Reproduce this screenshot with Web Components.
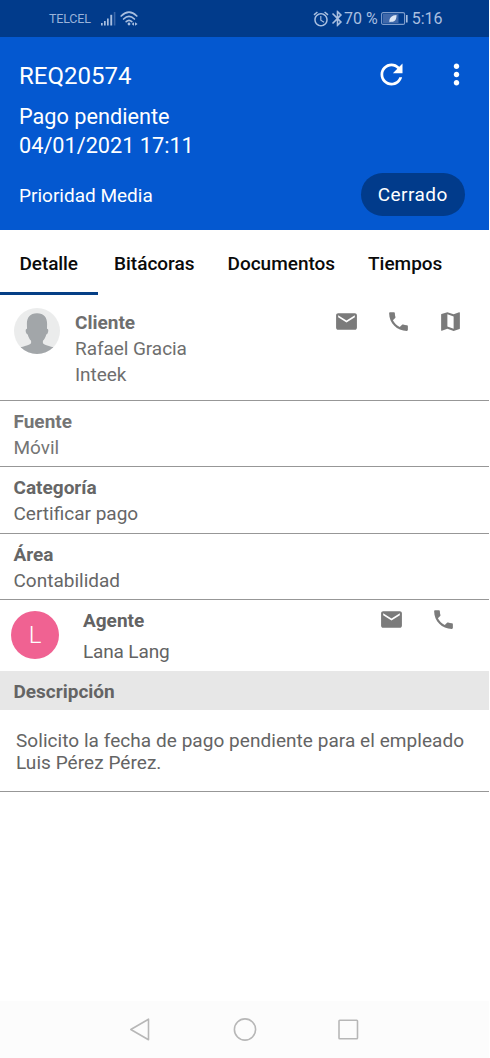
<!DOCTYPE html>
<html lang="es">
<head>
<meta charset="utf-8">
<title>REQ20574</title>
<style>
body{margin:0;background:#fff;font-family:Roboto,"Liberation Sans",sans-serif}
</style>
</head>
<body>
<ticket-app></ticket-app>
<script>
function define(name, html){
  const t=document.createElement('template');
  t.innerHTML=html;
  customElements.define(name, class extends HTMLElement{
    constructor(){
      super();
      this.attachShadow({mode:'open'}).append(t.content.cloneNode(true));
    }
  });
}

const ICONS={
  refresh:'M17.65 6.35C16.2 4.9 14.21 4 12 4c-4.42 0-7.99 3.58-7.99 8s3.57 8 7.99 8c3.73 0 6.84-2.55 7.73-6h-2.08c-.82 2.33-3.04 4-5.65 4-3.31 0-6-2.69-6-6s2.69-6 6-6c1.66 0 3.14.69 4.22 1.78L13 11h7V4l-2.35 2.35z',
  more:'M12 8c1.1 0 2-.9 2-2s-.9-2-2-2-2 .9-2 2 .9 2 2 2zm0 2c-1.1 0-2 .9-2 2s.9 2 2 2 2-.9 2-2-.9-2-2-2zm0 6c-1.1 0-2 .9-2 2s.9 2 2 2 2-.9 2-2-.9-2-2-2z',
  mail:'M20 4H4c-1.1 0-1.99.9-1.99 2L2 18c0 1.1.9 2 2 2h16c1.1 0 2-.9 2-2V6c0-1.1-.9-2-2-2zm0 4l-8 5-8-5V6l8 5 8-5v2z',
  phone:'M6.62 10.79c1.44 2.83 3.76 5.14 6.59 6.59l2.2-2.2c.27-.27.67-.36 1.02-.24 1.12.37 2.33.57 3.57.57.55 0 1 .45 1 1V20c0 .55-.45 1-1 1-9.39 0-17-7.61-17-17 0-.55.45-1 1-1h3.5c.55 0 1 .45 1 1 0 1.25.2 2.45.57 3.57.11.35.03.74-.25 1.02l-2.2 2.2z',
  map:'M20.5 3l-.16.03L15 5.1 9 3 3.36 4.9c-.21.07-.36.25-.36.48V20.5c0 .28.22.5.5.5l.16-.03L9 18.9l6 2.1 5.64-1.9c.21-.07.36-.25.36-.48V3.5c0-.28-.22-.5-.5-.5zM15 19l-6-2.11V5l6 2.11V19z',
  alarm:'M22 5.72l-4.6-3.86-1.29 1.53 4.6 3.86L22 5.72zM7.88 3.39L6.6 1.86 2 5.71l1.29 1.53 4.59-3.85zM12.5 8H11v6l4.75 2.85.75-1.23-4-2.37V8zM12 4c-4.97 0-9 4.03-9 9s4.02 9 9 9c4.97 0 9-4.03 9-9s-4.03-9-9-9zm0 16c-3.87 0-7-3.13-7-7s3.13-7 7-7 7 3.13 7 7-3.13 7-7 7z',
  bluetooth:'M17.71 7.71L12 2h-1v7.59L6.41 5 5 6.41 10.59 12 5 17.59 6.41 19 11 14.41V22h1l5.71-5.71-4.3-4.29 4.3-4.29zM13 5.83l1.88 1.88L13 9.59V5.83zm1.88 10.46L13 18.17v-3.76l1.88 1.88z'
};
customElements.define('glyph-icon', class extends HTMLElement{
  constructor(){super();this.attachShadow({mode:'open'});}
  connectedCallback(){
    this.shadowRoot.innerHTML=`<style>:host{display:block;width:25px;height:25px;flex:none}svg{display:block;width:100%;height:100%}</style>
    <svg viewBox="0 0 24 24" fill="currentColor"><path d="${ICONS[this.getAttribute('name')]}"/></svg>`;
  }
});

define('status-bar',`
<style>
:host{display:flex;box-sizing:border-box;height:37px;padding:0 46.5px 0 49px;background:#013b8b;color:#a9bfe0;align-items:center}
.carrier{font-size:12.5px;line-height:37px;letter-spacing:-.2px;color:#9ab3da}
.signal{margin-left:10px;width:15px;height:14px}
.wifi{margin-left:4px;width:18px;height:15px}
.right{margin-left:auto;display:flex;align-items:center;font-size:16px;line-height:37px}
.alarm{width:18px;height:18px}
.bt{width:19px;height:19px;margin:0 -3px 0 -2px}
.bat{width:27px;height:13px;margin:0 3.5px 0 3.5px}
svg{display:block}
</style>
<span class="carrier">TELCEL</span>
<svg class="signal" viewBox="0 0 15 14"><g fill="#a9bfe0"><rect x="0" y="11" width="1.7" height="2.5"/><rect x="3" y="9" width="1.7" height="4.5"/><rect x="6" y="6.5" width="1.7" height="7"/><rect x="9.3" y="2.8" width="1.9" height="10.7"/></g><rect x="12.8" y="0" width="1.6" height="13.5" fill="#3b66a8"/></svg>
<svg class="wifi" viewBox="0 0 18 15"><g fill="none" stroke="#a9bfe0" stroke-width="1.7" stroke-linecap="round"><path d="M1.2 5Q9-2.6 16.8 5"/><path d="M3.6 8Q9 2.8 14.4 8"/><path d="M6.2 10.7Q9 8.2 11.8 10.7"/></g><circle cx="9" cy="13" r="1.4" fill="#a9bfe0"/><path d="M14 11.3L11.6 13l2.4 1.7zM15 11.3l2.6 1.7-2.6 1.7z" fill="#a9bfe0"/></svg>
<div class="right">
<glyph-icon class="alarm" name="alarm"></glyph-icon><glyph-icon class="bt" name="bluetooth"></glyph-icon><span>70 %</span>
<svg class="bat" viewBox="0 0 27 13"><rect x=".6" y=".6" width="23" height="11.8" rx="1.5" fill="none" stroke="#7f9dcc" stroke-width="1.1"/><rect x="2" y="2" width="15.5" height="9" fill="#3f68aa"/><path d="M8.400 10.200C8 5.400 11 3.300 15.500 3c.2 4.500-1.800 7.400-5.700 6.700z" fill="#dce6f5"/><rect x="25" y="3" width="1.600" height="7.500" fill="#a9bfe0"/></svg>
<span>5:16</span>
</div>`);

define('status-pill',`
<style>:host{display:block;width:103.500px;height:43px;border-radius:22px;background:#013b8b;text-align:center;font-size:19px;line-height:43px;letter-spacing:.45px}</style><slot></slot>`);

define('ticket-header',`
<style>
:host{display:block;box-sizing:border-box;height:193px;background:#0458d0;color:#fff;padding:22px 24.500px 0 19px}
.top{display:flex;height:32px;align-items:center}
.id{font-size:24px;line-height:32px;padding-top:1px}
.act{margin:-1px -8.500px 0 auto;display:flex;gap:32px}
.act glyph-icon{width:33px;height:33px}
.info{font-size:21.700px;line-height:29px;margin-top:11px}
.bottom{display:flex;justify-content:space-between;height:43px;margin-top:13px}
.prio{font-size:19px;line-height:45px}
</style>
<div class="top"><span class="id"><slot name="id"></slot></span><div class="act"><glyph-icon name="refresh"></glyph-icon><glyph-icon name="more"></glyph-icon></div></div>
<div class="info"><slot name="title"></slot><br><slot name="date"></slot></div>
<div class="bottom"><span class="prio"><slot name="priority"></slot></span><status-pill><slot name="status"></slot></status-pill></div>`);

define('tab-item',`
<style>:host{display:block;box-sizing:border-box;height:65px;font-size:19px;font-weight:500;line-height:67px;color:#0a0a0a;white-space:nowrap}
:host([active]){border-bottom:3px solid #053f86}</style><slot></slot>`);

define('tab-bar',`
<style>:host{display:flex;height:65px;background:#fff}
.a{padding:0 19.500px;width:98px;letter-spacing:-.08px}.b{margin-left:16px;width:113.500px}.c{width:140.500px}</style>
<tab-item class="a" active>Detalle</tab-item><tab-item class="b">Bitácoras</tab-item><tab-item class="c">Documentos</tab-item><tab-item>Tiempos</tab-item>`);

define('person-row',`
<style>
:host{display:flex;box-sizing:border-box;color:#6e6e6e;font-size:19px}
.lines{white-space:nowrap}
.actions{display:flex;gap:26.700px;margin-left:auto}
</style>
<slot name="avatar"></slot>
<div class="lines"><slot></slot></div>
<div class="actions"><slot name="action"></slot></div>`);

define('photo-avatar',`
<style>:host{display:block;width:46px;height:46px}svg{display:block}</style>
<svg width="46" height="46" viewBox="0 0 46 46"><defs><clipPath id="c"><circle cx="23" cy="23" r="23"/></clipPath></defs><circle cx="23" cy="23" r="23" fill="#ebecec"/><path clip-path="url(#c)" fill="#a2a6a9" d="M23 5.200c7 0 10.300 4.500 10.100 10.800l-.1 4.700c1.700.1 1.500 2.500.7 4.400-.4 1-.8 1.300-1.400 1.300-.8 3-2 5-3.400 6.300v2.200c.5 1.700 3.600 2.300 10.600 4.400V46h-33v-6.700c7-2.100 10.100-2.700 10.600-4.400v-2.200c-1.400-1.300-2.600-3.300-3.400-6.300-.6 0-1-.3-1.400-1.300-.8-1.900-1-4.300.7-4.400L12.900 16C12.700 9.700 16 5.200 23 5.200z"/></svg>`);

define('letter-avatar',`
<style>:host{display:block;width:48px;height:48px;border-radius:50%;background:#f06292;color:#fff;font-size:24px;font-weight:300;line-height:49px;text-align:center}</style><slot></slot>`);

define('field-row',`
<style>:host{display:block;box-sizing:border-box;border-bottom:1px solid #979797;padding:8px 14px 0 13.500px;color:#666;font-size:19px;line-height:26px}
b{display:block;font-weight:700}</style><b><slot name="label"></slot></b><slot></slot>`);

define('description-block',`
<style>:host{display:block;color:#646464;font-size:19px}
.head{height:39px;box-sizing:border-box;background:#e7e7e7;padding:0 13.500px;font-weight:700;line-height:41px}
.body{box-sizing:border-box;height:82px;padding:20px 16px 0;line-height:22px;letter-spacing:.05px;border-bottom:1px solid #979797}</style>
<div class="head"><slot name="label"></slot></div><div class="body"><slot></slot></div>`);

define('nav-bar',`
<style>:host{display:flex;box-sizing:border-box;height:57px;background:#fcfcfc;justify-content:center;gap:80px;align-items:center}
svg{display:block;width:24px;height:24px;fill:none;stroke:#b7b7b7;stroke-width:1.6;stroke-linejoin:round}</style>
<svg viewBox="0 0 24 24"><path d="M1.800 11.500L19.500 1.200v20.600z"/></svg>
<svg viewBox="0 0 24 24"><circle cx="12" cy="11.500" r="10.600"/></svg>
<svg viewBox="0 0 24 24"><rect x="2" y="2.300" width="18.500" height="18.500" rx=".8"/></svg>`);

define('ticket-app',`
<style>
:host{display:flex;flex-direction:column;width:489px;height:1058px;background:#fff}
status-bar,ticket-header,tab-bar,person-row,field-row,description-block,nav-bar{flex:none}
.client{height:106px;padding:13px 26.500px 0 14px;border-bottom:1px solid #979797;line-height:26px}
.client photo-avatar{margin-right:15px}
.client b{margin-top:2px}
.client b,.client span,.agent b,.agent span{display:block}
.client span{letter-spacing:-.06px}
.client glyph-icon{margin-top:.5px}
.agent{height:71px;padding:5px 33.500px 0 11px;line-height:31px;color:#636363}
.agent letter-avatar{margin:6px 24px 0 0}
.agent span{letter-spacing:-.15px}
.agent glyph-icon{margin-top:2px}
glyph-icon{color:#7b7b7b}
nav-bar{margin-top:auto}
</style>
<status-bar></status-bar>
<ticket-header><span slot="id">REQ20574</span><span slot="title">Pago pendiente</span><span slot="date">04/01/2021 17:11</span><span slot="priority">Prioridad Media</span><span slot="status">Cerrado</span></ticket-header>
<tab-bar></tab-bar>
<person-row class="client"><photo-avatar slot="avatar"></photo-avatar><b>Cliente</b><span>Rafael Gracia</span><span>Inteek</span><glyph-icon slot="action" name="mail"></glyph-icon><glyph-icon slot="action" name="phone"></glyph-icon><glyph-icon slot="action" name="map"></glyph-icon></person-row>
<field-row style="height:66px;color:#757575"><span slot="label">Fuente</span>Móvil</field-row>
<field-row style="height:67px"><span slot="label">Categoría</span>Certificar pago</field-row>
<field-row style="height:66px"><span slot="label">Área</span>Contabilidad</field-row>
<person-row class="agent"><letter-avatar slot="avatar">L</letter-avatar><b>Agente</b><span>Lana Lang</span><glyph-icon slot="action" name="mail"></glyph-icon><glyph-icon slot="action" name="phone"></glyph-icon></person-row>
<description-block><span slot="label">Descripción</span>Solicito la fecha de pago pendiente para el empleado Luis Pérez Pérez.</description-block>
<nav-bar></nav-bar>`);
</script>
</body>
</html>
